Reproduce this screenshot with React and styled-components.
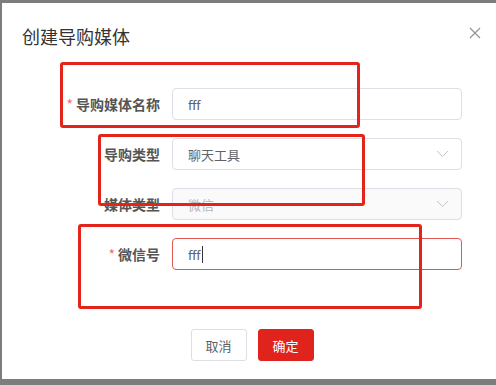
import React from "react";
import styled, { createGlobalStyle } from "styled-components";

const Global = createGlobalStyle`
  html, body { margin: 0; padding: 0; }
  body {
    background: #7d7d7d;
    overflow: hidden;
    width: 496px;
    height: 385px;
    font-family: "Noto Sans CJK SC", "Noto Sans", sans-serif;
  }
`;

const Page = styled.div`
  position: relative;
  width: 496px;
  height: 385px;
  padding: 3px 0 0 2px;
  box-sizing: border-box;
`;

const Dialog = styled.div`
  width: 500px;
  height: 376px;
  background: #fff;
  box-sizing: border-box;
  display: flex;
  flex-direction: column;
`;

const Header = styled.div`
  display: flex;
  align-items: center;
  justify-content: space-between;
  padding: 21px 20px 0 20px;
  height: 24px;
`;

const Title = styled.div`
  font-size: 18px;
  line-height: 24px;
  color: #333;
`;

const Close = styled.button`
  border: 0;
  background: none;
  padding: 0;
  margin-right: 1px;
  margin-top: -6px;
  width: 12px;
  height: 12px;
  display: flex;
  cursor: pointer;
`;

const Form = styled.div`
  display: flex;
  flex-direction: column;
  gap: 18px;
  margin-top: 40px;
`;

const Row = styled.div`
  display: flex;
  align-items: center;
  height: 32px;
`;

const Label = styled.label`
  width: 170px;
  padding-right: 12px;
  box-sizing: border-box;
  text-align: right;
  font-size: 14px;
  font-weight: 700;
  color: #555;
  line-height: 32px;
  white-space: nowrap;
`;

const Star = styled.span`
  color: #f56c6c;
  font-weight: 400;
  margin-right: 3px;
`;

const Field = styled.div`
  width: 290px;
  height: 32px;
  box-sizing: border-box;
  border: 1px solid ${(p) => (p.$error ? "#e0574f" : "#dcdfe6")};
  border-radius: 4px;
  background: ${(p) => (p.$disabled ? "#fafafa" : "#fff")};
  display: flex;
  align-items: center;
  justify-content: space-between;
  padding: 0 12px 0 15px;
  font-size: 13px;
  color: ${(p) => (p.$disabled ? "#b4b6ba" : "#606266")};
`;

const Value = styled.span`
  display: flex;
  align-items: center;
`;

const Caret = styled.span`
  display: inline-block;
  width: 1px;
  height: 17px;
  background: #333;
  margin-left: 1px;
`;

const Footer = styled.div`
  display: flex;
  justify-content: center;
  gap: 11px;
  margin-top: 59px;
`;

const Button = styled.button`
  width: 56px;
  height: 32px;
  box-sizing: border-box;
  border-radius: 3px;
  font-family: inherit;
  font-size: 13px;
  border: 1px solid ${(p) => (p.$primary ? "#e0231c" : "#dcdfe6")};
  background: ${(p) => (p.$primary ? "#e0231c" : "#fff")};
  color: ${(p) => (p.$primary ? "#fff" : "#606266")};
  padding: 0;
`;

const Mark = styled.div`
  position: absolute;
  box-sizing: border-box;
  border: 3px solid #e3241b;
  border-radius: 3px;
  pointer-events: none;
`;

const Chevron = () => (
  <svg width="13" height="8" viewBox="0 0 13 8">
    <path d="M1 1 L6.5 6.5 L12 1" fill="none" stroke="#c0c4cc" strokeWidth="1" />
  </svg>
);

export default function App() {
  return (
    <>
      <Global />
      <Page>
        <Dialog>
          <Header>
            <Title>创建导购媒体</Title>
            <Close aria-label="close">
              <svg width="12" height="12" viewBox="0 0 12 12">
                <path d="M1 1 L11 11 M11 1 L1 11" stroke="#909399" strokeWidth="1.2" />
              </svg>
            </Close>
          </Header>
          <Form>
            <Row>
              <Label><Star>*</Star>导购媒体名称</Label>
              <Field><Value>fff</Value></Field>
            </Row>
            <Row>
              <Label>导购类型</Label>
              <Field><Value>聊天工具</Value><Chevron /></Field>
            </Row>
            <Row>
              <Label>媒体类型</Label>
              <Field $disabled><Value>微信</Value><Chevron /></Field>
            </Row>
            <Row>
              <Label><Star>*</Star>微信号</Label>
              <Field $error><Value>fff<Caret /></Value></Field>
            </Row>
          </Form>
          <Footer>
            <Button>取消</Button>
            <Button $primary>确定</Button>
          </Footer>
        </Dialog>
        <Mark style={{ left: 60, top: 62, width: 300, height: 66 }} />
        <Mark style={{ left: 98, top: 134, width: 267, height: 72 }} />
        <Mark style={{ left: 78, top: 224, width: 344, height: 85 }} />
      </Page>
    </>
  );
}
